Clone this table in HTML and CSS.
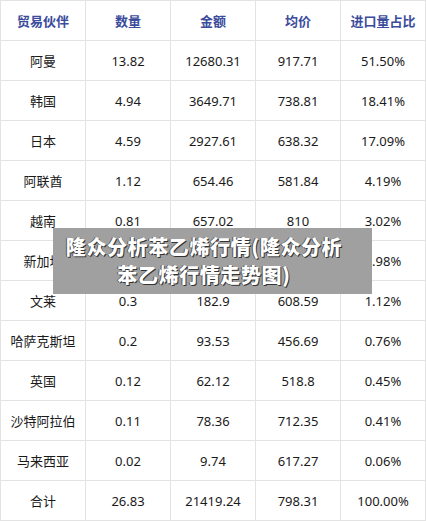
FILE: index.html
```html
<!DOCTYPE html>
<html lang="zh">
<head>
<meta charset="utf-8">
<link rel="stylesheet" href="styles.css">
</head>
<body>
<div class="wrap">
<table class="trade">
<thead>
<tr><th>贸易伙伴</th><th>数量</th><th>金额</th><th>均价</th><th>进口量占比</th></tr>
</thead>
<tbody>
<tr><td>阿曼</td><td>13.82</td><td>12680.31</td><td>917.71</td><td>51.50%</td></tr>
<tr><td>韩国</td><td>4.94</td><td>3649.71</td><td>738.81</td><td>18.41%</td></tr>
<tr><td>日本</td><td>4.59</td><td>2927.61</td><td>638.32</td><td>17.09%</td></tr>
<tr><td>阿联酋</td><td>1.12</td><td>654.46</td><td>581.84</td><td>4.19%</td></tr>
<tr><td>越南</td><td>0.81</td><td>657.02</td><td>810</td><td>3.02%</td></tr>
<tr><td>新加坡</td><td>0.8</td><td>523.67</td><td>654.59</td><td>2.98%</td></tr>
<tr><td>文莱</td><td>0.3</td><td>182.9</td><td>608.59</td><td>1.12%</td></tr>
<tr><td>哈萨克斯坦</td><td>0.2</td><td>93.53</td><td>456.69</td><td>0.76%</td></tr>
<tr><td>英国</td><td>0.12</td><td>62.12</td><td>518.8</td><td>0.45%</td></tr>
<tr><td>沙特阿拉伯</td><td>0.11</td><td>78.36</td><td>712.35</td><td>0.41%</td></tr>
<tr><td>马来西亚</td><td>0.02</td><td>9.74</td><td>617.27</td><td>0.06%</td></tr>
<tr><td>合计</td><td>26.83</td><td>21419.24</td><td>798.31</td><td>100.00%</td></tr>
</tbody>
</table>
<div class="caption">隆众分析苯乙烯行情(隆众分析苯乙烯行情走势图)</div>
</div>
</body>
</html>
```
FILE: styles.css
```css
html, body {
  margin: 0;
  padding: 0;
  background: #ffffff;
}
.wrap {
  position: relative;
  width: 426px;
}
.trade {
  border-collapse: collapse;
  table-layout: fixed;
  width: 426px;
  font-family: "Noto Sans", "Noto Sans CJK SC", sans-serif;
  font-size: 13px;
  color: #1a1a1a;
}
.trade th, .trade td {
  border: 1px solid #e3e3e3;
  height: 39px;
  padding: 0;
  text-align: center;
  vertical-align: middle;
  white-space: nowrap;
}
.trade th {
  color: #3b4c9c;
  font-weight: bold;
}
.caption {
  position: absolute;
  left: 53px;
  top: 228px;
  width: 278px;
  padding: 5px 29px 5px 12px;
  background: #a0a0a0;
  color: #ffffff;
  font-family: "Noto Sans CJK SC", sans-serif;
  font-weight: 900;
  font-size: 20px;
  letter-spacing: 0.6px;
  line-height: 28px;
  text-align: center;
  text-shadow: 1px 1px 0 #333, -1px 0 0 #555;
}
```
